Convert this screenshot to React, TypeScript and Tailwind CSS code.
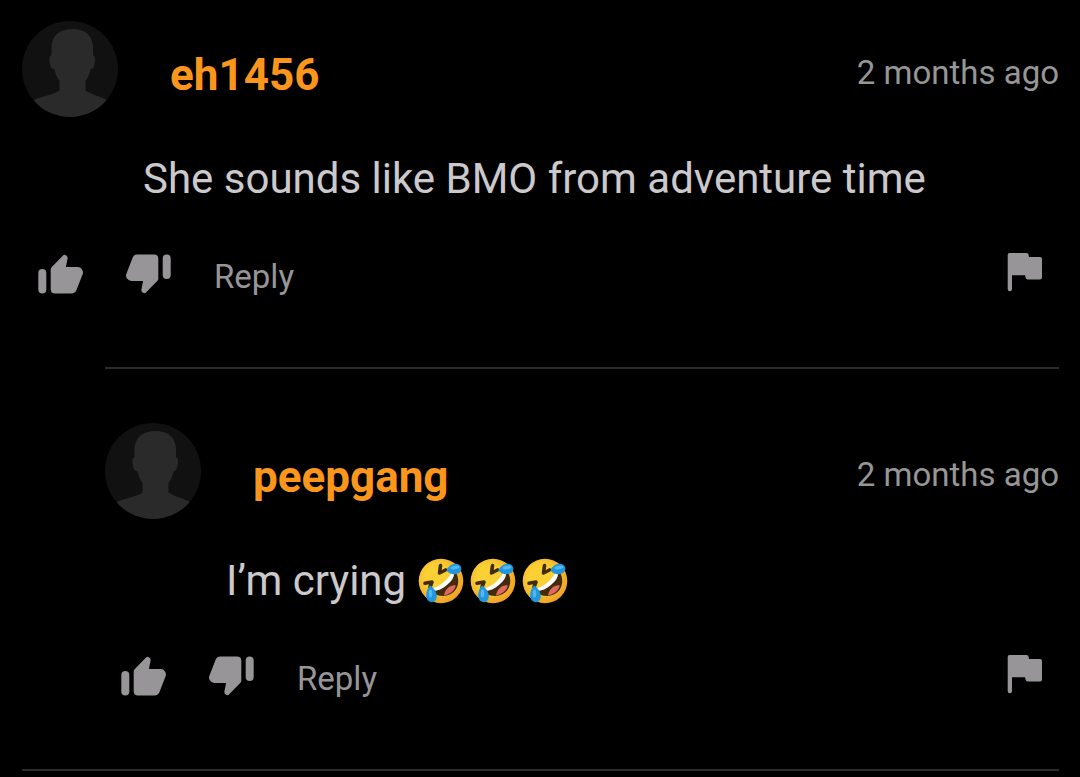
type Comment = {
  id: number;
  author: string;
  age: string;
  text: string;
  laughs?: number;
};

const comment: Comment = {
  id: 1,
  author: "eh1456",
  age: "2 months ago",
  text: "She sounds like BMO from adventure time",
};

const replies: Comment[] = [
  { id: 2, author: "peepgang", age: "2 months ago", text: "I’m crying", laughs: 3 },
];

function Avatar() {
  return (
    <svg viewBox="0 0 96 96" className="size-24 shrink-0" aria-hidden="true">
      <defs>
        <clipPath id="avatar-clip">
          <circle cx="48" cy="48" r="48" />
        </clipPath>
      </defs>
      <g clipPath="url(#avatar-clip)">
        <rect width="96" height="96" fill="#111111" />
        <path
          fill="#2a2a2a"
          d="M29.500 34V26C30 14 38 8 50.500 8S70.500 14 71 26V34C73.500 35 73.500 39 72.500 43C72 46 70.500 48 68.500 48.500C67.500 53 66 57 63.500 60V69.500C70 74 78 75 85 79L96 100H0L11 79.500C19 75 30 74.500 37.500 69.500V60C35 57 33.500 53 32.500 48.500C30 48.500 28.500 46 28 43C27 39 27 35 29.500 34Z"
        />
      </g>
    </svg>
  );
}

function ThumbIcon({ className = "" }: { className?: string }) {
  return (
    <svg
      viewBox="0 0 45 40"
      fill="currentColor"
      className={`h-10 w-[45px] ${className}`}
      aria-hidden="true"
    >
      <rect x="0.300" y="15" width="8" height="24.400" rx="4" />
      <path d="M12.700 15.500Q12.700 14 13.800 12.900L24.800 1.700Q26 .5 27.400 1Q30 2 29.600 4.500L27.900 13H39.500Q42.500 13 44 15.400Q45.500 17.500 44.700 20L38.500 36Q37.200 39.400 33.500 39.400H17Q12.700 39.400 12.700 35.200Z" />
    </svg>
  );
}

function FlagIcon() {
  return (
    <svg viewBox="0 0 36 40" fill="currentColor" className="h-10 w-9" aria-hidden="true">
      <path d="M2.500 1H19.500Q21.300 1 21.600 2.700L22 5H33Q35 5 35 7V25.500Q35 27.500 33 27.500H20.700Q19 27.500 18.600 25.800L18.100 23.300H5V37Q5 39.200 2.800 39.200Q.7 39.200 .7 37V3Q.7 1 2.500 1Z" />
    </svg>
  );
}

function RoflIcon() {
  return (
    <svg viewBox="0 0 46 46" className="size-[46px]" role="img" aria-label="Rolling on the floor laughing">
      <defs>
        <radialGradient id="rofl-face" cx="0.4" cy="0.4" r="0.65">
          <stop offset="0.4" stopColor="#fbd034" />
          <stop offset="1" stopColor="#ee9f26" />
        </radialGradient>
      </defs>
      <circle cx="23" cy="23" r="22.300" fill="url(#rofl-face)" />
      <path d="M35 15L38.500 15.500C42 23 40 30.500 35 34.500C30 38.500 23 39 16.500 36L15 32C25 30 31 24 35 15Z" fill="#422b0d" />
      <path d="M37.800 27.500C33 26.500 27 30.500 26 37.500C31.500 36.500 36.500 33 37.800 27.500Z" fill="#e0685f" />
      <path d="M33.500 14.500L36 16C36.200 19 34 22.500 30.500 25.500C26.500 29.500 21.500 32.500 17 32.800L14.500 30.500C22.500 28 29 22.500 33.500 14.500Z" fill="#fff" />
      <g fill="none" stroke="#422b0d" strokeWidth="3.600" strokeLinecap="round" strokeLinejoin="round">
        <path d="M22.500 7.500L21.500 15L27.500 12" />
        <path d="M7 25.200L14 24L12 29" />
      </g>
      <path d="M28.500 12.500C30 8 35 4.800 39.500 6C44.500 7.500 44.500 13.500 40 15.500C36 17.200 31 16 28.500 12.500Z" fill="#2096df" />
      <path d="M12 27.500C16.500 30 19.800 36 18.500 40.500C17 45.300 11 45.300 9 41C7 36.500 9 31 12 27.500Z" fill="#2096df" />
      <ellipse cx="37" cy="9.500" rx="4.500" ry="1.800" fill="#53b8ef" transform="rotate(-8 37 9.500)" />
      <ellipse cx="12.500" cy="35.500" rx="1.800" ry="4" fill="#53b8ef" />
    </svg>
  );
}

function CommentItem({ author, age, text, laughs = 0 }: Comment) {
  return (
    <article className="pb-[69px]">
      <header className="flex items-center">
        <Avatar />
        <a href="#" className="ml-[52px] pt-3 text-[44px] leading-[52px] font-bold text-[#fa961c]">
          {author}
        </a>
        <time className="ml-auto pt-2 text-[33px] leading-[40px] text-[#969696]">{age}</time>
      </header>

      <div className="mt-9 ml-[121px] flex items-center gap-3 text-[42px] leading-[52px] text-[#cbc9cb]">
        <p>{text}</p>
        {laughs > 0 && (
          <span className="flex gap-1.5">
            {Array.from({ length: laughs }, (_, i) => (
              <RoflIcon key={i} />
            ))}
          </span>
        )}
      </div>

      <div className="mt-[45px] flex h-12 items-center px-4 text-[#979597]">
        <button type="button" aria-label="Like">
          <ThumbIcon />
        </button>
        <button type="button" aria-label="Dislike" className="ml-[43px]">
          <ThumbIcon className="rotate-180" />
        </button>
        <button type="button" className="ml-[43px] pt-1.5 text-[33px] leading-[40px]">
          Reply
        </button>
        <button type="button" aria-label="Report" className="ml-auto pb-1">
          <FlagIcon />
        </button>
      </div>
    </article>
  );
}

export default function App() {
  return (
    <main className="min-h-screen bg-black pt-[21px] pr-[21px] pl-[22px] font-[Roboto,sans-serif]">
      <section className="border-b-2 border-[#2c2c2c]">
        <CommentItem {...comment} />
        <div className="ml-[83px]">
          {replies.map((reply) => (
            <div key={reply.id} className="border-t-2 border-[#2c2c2c] pt-[54px]">
              <CommentItem {...reply} />
            </div>
          ))}
        </div>
      </section>
    </main>
  );
}
